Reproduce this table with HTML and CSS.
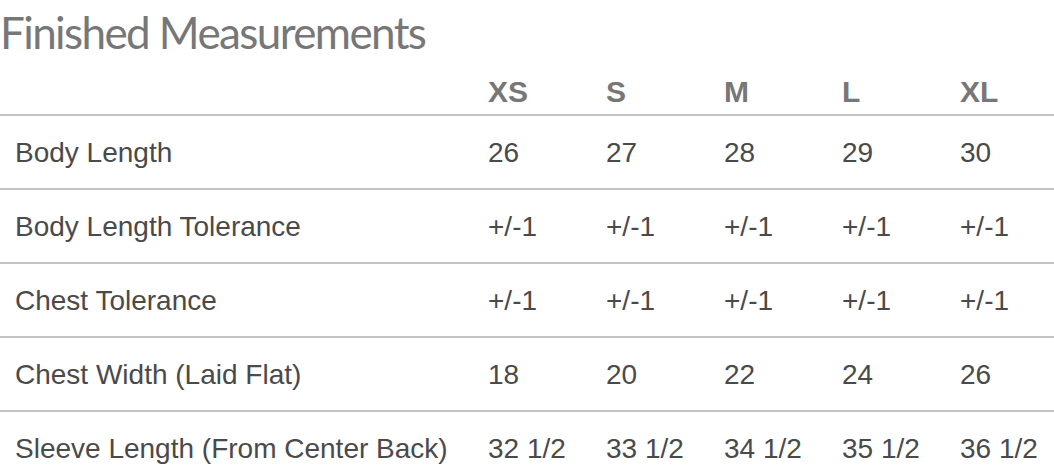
FILE: index.html
```html
<!DOCTYPE html>
<html lang="en">
<head>
<meta charset="utf-8">
<title>Finished Measurements</title>
<link rel="stylesheet" href="styles.css">
</head>
<body>
<section class="measurements">
  <h1 class="title">Finished Measurements</h1>
  <table class="size-table">
    <colgroup>
      <col class="col-label">
      <col class="col-size">
      <col class="col-size">
      <col class="col-size">
      <col class="col-size">
      <col class="col-size">
    </colgroup>
    <thead>
      <tr>
        <th></th>
        <th>XS</th>
        <th>S</th>
        <th>M</th>
        <th>L</th>
        <th>XL</th>
      </tr>
    </thead>
    <tbody>
      <tr>
        <td>Body Length</td>
        <td>26</td><td>27</td><td>28</td><td>29</td><td>30</td>
      </tr>
      <tr>
        <td>Body Length Tolerance</td>
        <td>+/-1</td><td>+/-1</td><td>+/-1</td><td>+/-1</td><td>+/-1</td>
      </tr>
      <tr>
        <td>Chest Tolerance</td>
        <td>+/-1</td><td>+/-1</td><td>+/-1</td><td>+/-1</td><td>+/-1</td>
      </tr>
      <tr>
        <td>Chest Width (Laid Flat)</td>
        <td>18</td><td>20</td><td>22</td><td>24</td><td>26</td>
      </tr>
      <tr>
        <td>Sleeve Length (From Center Back)</td>
        <td>32 1/2</td><td>33 1/2</td><td>34 1/2</td><td>35 1/2</td><td>36 1/2</td>
      </tr>
    </tbody>
  </table>
</section>
</body>
</html>
```

FILE: styles.css
```css
html, body {
  margin: 0;
  padding: 0;
  overflow: hidden;
  background: #ffffff;
}

.measurements {
  width: 1062px;
}

.title {
  margin: 0;
  padding: 4px 0 0 0;
  font-family: "Lato", "Open Sans", sans-serif;
  font-weight: 400;
  font-size: 44px;
  line-height: 56px;
  letter-spacing: -1.6px;
  color: #777777;
  white-space: nowrap;
}

.size-table {
  border-collapse: collapse;
  table-layout: fixed;
  width: 1062px;
  font-family: "Liberation Sans", Arial, sans-serif;
}

.col-label {
  width: 472px;
}

.col-size {
  width: 118px;
}

.size-table th {
  padding: 16px 0 6px 16px;
  font-size: 30px;
  font-weight: 700;
  line-height: 32px;
  color: #777777;
  text-align: left;
  border-bottom: 2px solid #c4c4c4;
}

.size-table td {
  height: 71px;
  padding: 1px 0 0 15px;
  font-size: 28px;
  line-height: 71px;
  color: #4a4a4a;
  text-align: left;
  white-space: nowrap;
  border-bottom: 2px solid #c4c4c4;
  box-sizing: content-box;
}

.size-table td + td {
  padding-left: 16px;
}

.size-table tbody tr:last-child td {
  border-bottom: none;
}
```
